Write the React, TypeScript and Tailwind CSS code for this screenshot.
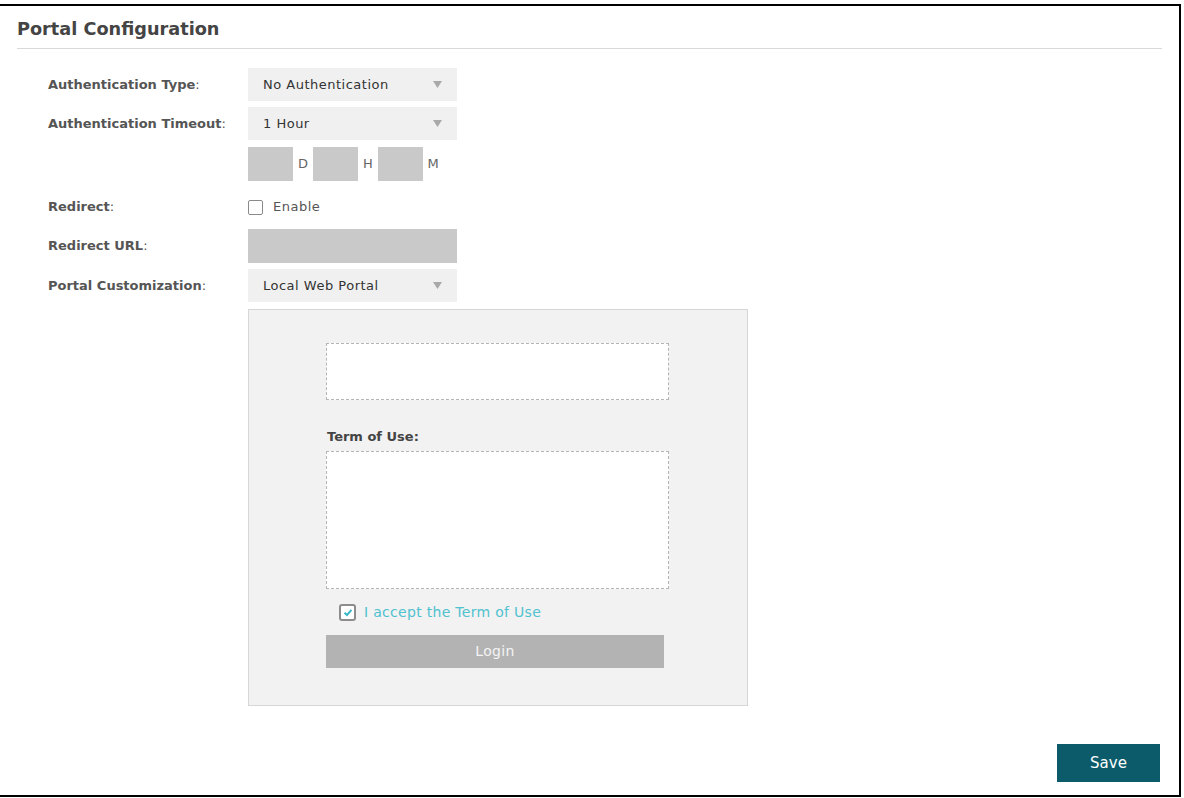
import React from "react";

const font = { fontFamily: '"DejaVu Sans", Verdana, sans-serif' };

const Arrow = () => (
    <svg width="9" height="7" viewBox="0 0 9 7" className="shrink-0">
        <path d="M0 0 H9 L4.5 7 Z" fill="#a9a9a9" />
    </svg>
);

const Select = ({ value }: { value: string }) => (
    <div className="w-[209px] h-[33px] bg-[#f0f0f0] flex items-center justify-between pl-[15px] pr-[15px] text-[13px] tracking-[0.5px] text-[#333]">
        <span>{value}</span>
        <Arrow />
    </div>
);

const Label = ({ text }: { text: string }) => (
    <div className="w-[200px] shrink-0 text-[13px] text-[#555]">
        <span className="font-bold">{text}</span>:
    </div>
);

const Row = ({ label, children, className }: { label?: string; children: React.ReactNode; className?: string }) => (
    <div className={`flex items-center ${className ?? ""}`}>
        {label ? <Label text={label} /> : <div className="w-[200px] shrink-0" />}
        {children}
    </div>
);

const TimeBox = ({ unit }: { unit: string }) => (
    <div className="flex items-center">
        <div className="w-[45px] h-[34px] bg-[#c9c9c9]" />
        <span className="w-[20px] text-center text-[13px] text-[#666]">{unit}</span>
    </div>
);

export default function App() {
    return (
        <div className="w-[1184px] h-[798px] bg-white pt-[4px] overflow-hidden" style={font}>
            <div className="w-[1181px] h-[793px] border-y-2 border-r-2 border-black flex flex-col">
                {/* header */}
                <div className="pl-[17px] pt-[11px] pr-[17px]">
                    <div className="text-[17.7px] leading-[24px] font-bold text-[#444]">Portal Configuration</div>
                    <div className="mt-[7px] h-px bg-[#d9d9d9]" />
                </div>

                {/* form */}
                <div className="pl-[48px] pt-[19px] flex flex-col">
                    <Row label="Authentication Type">
                        <Select value="No Authentication" />
                    </Row>
                    <Row label="Authentication Timeout" className="mt-[6px]">
                        <Select value="1 Hour" />
                    </Row>
                    <Row className="mt-[7px]">
                        <div className="flex">
                            <TimeBox unit="D" />
                            <TimeBox unit="H" />
                            <TimeBox unit="M" />
                        </div>
                    </Row>
                    <Row label="Redirect" className="mt-[7px] h-[38px]">
                        <div className="flex items-center gap-[10px] text-[13px] tracking-[0.5px] text-[#555]">
                            <div className="w-[15px] h-[15px] rounded-[2px] border border-[#8a8a8a] bg-white" />
                            <span>Enable</span>
                        </div>
                    </Row>
                    <Row label="Redirect URL" className="mt-[3px]">
                        <div className="w-[209px] h-[34px] bg-[#c9c9c9]" />
                    </Row>
                    <Row label="Portal Customization" className="mt-[6px]">
                        <Select value="Local Web Portal" />
                    </Row>
                    <Row className="mt-[7px] items-start">
                        {/* portal preview */}
                        <div className="w-[500px] h-[397px] bg-[#f2f2f2] border border-[#d6d6d6] pt-[33px] pl-[77px] flex flex-col">
                            <div className="w-[343px] h-[57px] bg-white border border-dashed border-[#b5b5b5]" />
                            <div className="mt-[29px] text-[13px] leading-[16px] font-bold text-[#444] pl-[1px]">Term of Use:</div>
                            <div className="mt-[6px] w-[343px] h-[138px] bg-white border border-dashed border-[#b5b5b5]" />
                            <div className="mt-[13px] ml-[13px] flex items-center gap-[8px]">
                                <div className="w-[17px] h-[17px] rounded-[3px] border-2 border-[#8d8d8d] bg-white flex items-center justify-center">
                                    <svg width="10" height="9" viewBox="0 0 10 9">
                                        <path d="M1.5 4.8 L4 7 L8.5 1.8" fill="none" stroke="#3bb8c8" strokeWidth="2" />
                                    </svg>
                                </div>
                                <span className="text-[14px] tracking-[0.3px] text-[#4fc1cf]">I accept the Term of Use</span>
                            </div>
                            <div className="mt-[12px] w-[338px] h-[33px] bg-[#b3b3b3] flex items-center justify-center text-[14px] tracking-[0.3px] text-[#f4f4f4]">
                                Login
                            </div>
                        </div>
                    </Row>
                </div>

                {/* footer */}
                <div className="flex justify-end pr-[19px] mt-[38px]">
                    <button className="w-[103px] h-[38px] bg-[#0c5b6b] text-white text-[15px]">Save</button>
                </div>
            </div>
        </div>
    );
}
